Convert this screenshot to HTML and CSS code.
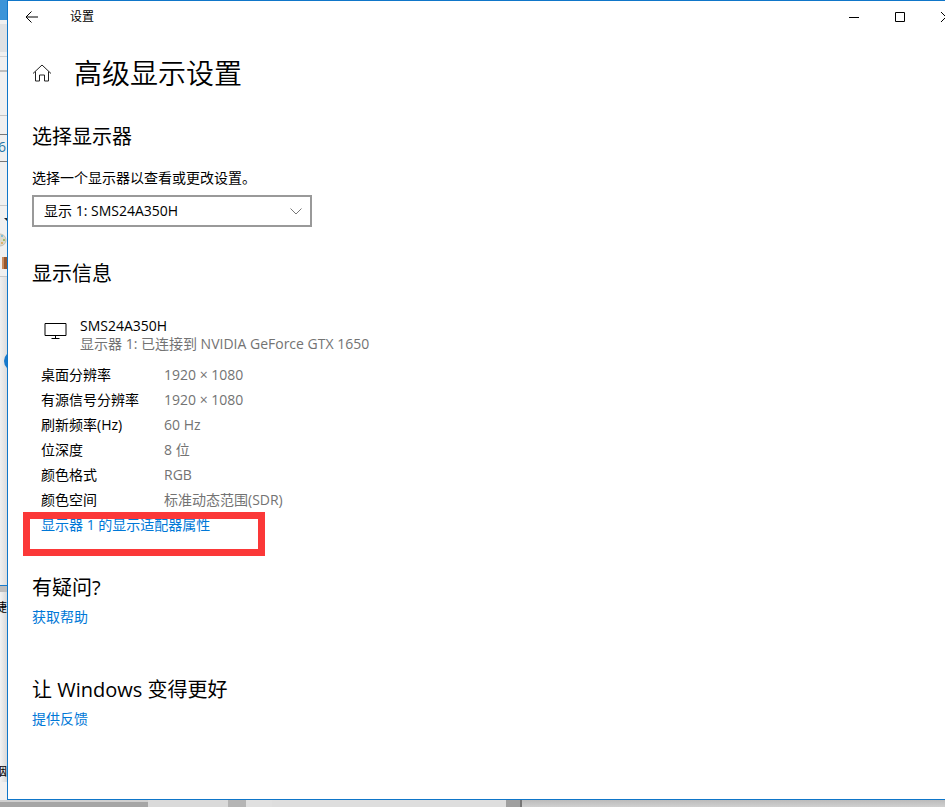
FILE: index.html
```html
<!DOCTYPE html>
<html lang="zh-CN">

<head>
  <meta charset="UTF-8" />
  <meta name="viewport" content="width=device-width, initial-scale=1.0" />
  <title>设置</title>
  <link rel="stylesheet" href="styles.css">
</head>

<body>
  <!-- windows behind the settings window, left edge -->
  <div class="behind-left">
    <div class="strip blue"></div>
    <div class="strip tabs"></div>
    <div class="strip address"></div>
    <div class="strip toolbar"></div>
    <div class="strip ruler"></div>
    <div class="strip size-box">6</div>
    <div class="strip gap"></div>
    <div class="strip tools">
      <svg width="7" height="71" viewBox="0 0 7 71">
        <path d="M4 12h6l-3 3z" fill="#222" />
        <circle cx="0" cy="34" r="6" fill="#dcd9cd" stroke="#c2bfb4" />
        <circle cx="2" cy="30" r="1" fill="#5fb3dd" />
        <circle cx="4" cy="34" r="1" fill="#8cb84f" />
        <circle cx="2" cy="37" r="1" fill="#e0a04a" />
        <path d="M2 51h6v12H2z" fill="#96572f" />
        <path d="M2 51h2v12H2z" fill="#c98b5e" />
      </svg>
    </div>
    <div class="strip canvas">
      <div class="dot"></div>
    </div>
    <div class="strip shade"></div>
    <div class="strip desktop">
      <span>捷</span>
      <span>烟</span>
    </div>
  </div>

  <div class="window">
    <div class="titlebar">
      <button class="back" aria-label="返回">
        <svg width="14" height="12" viewBox="0 0 14 12">
          <path d="M13 6H1M6.500 .5L1 6l5.500 5.500" />
        </svg>
      </button>
      <span class="caption">设置</span>
      <div class="controls">
        <button aria-label="最小化">
          <svg width="10" height="10" viewBox="0 0 10 10"><path d="M0 5.500h10" /></svg>
        </button>
        <button aria-label="最大化">
          <svg width="10" height="10" viewBox="0 0 10 10"><path d="M.5 .5h9v9h-9z" /></svg>
        </button>
        <button aria-label="关闭">
          <svg width="10" height="10" viewBox="0 0 10 10"><path d="M0 0l10 10M10 0L0 10" /></svg>
        </button>
      </div>
    </div>

    <div class="content">
      <div class="header">
        <a href="#" class="home" aria-label="主页">
          <svg width="20" height="18" viewBox="0 0 20 18">
            <path d="M1 9.500L10 1l9 8.500M3.500 7.500v9.500h4v-6h5v6h4V7.500" />
          </svg>
        </a>
        <h1>高级显示设置</h1>
      </div>

      <h2>选择显示器</h2>
      <label for="display" class="display-label">选择一个显示器以查看或更改设置。</label>
      <div class="select-box">
        <select id="display">
          <option>显示 1: SMS24A350H</option>
        </select>
        <svg class="arrow" width="12" height="7" viewBox="0 0 12 7"><path d="M.5 .5L6 6l5.500-5.500" /></svg>
      </div>

      <h2 class="info-title">显示信息</h2>
      <div class="info">
        <div class="monitor">
          <svg width="24" height="18" viewBox="0 0 24 18">
            <path d="M1 1.500h21v12H1zM11.500 13.500v3M7.500 16.500h8" />
          </svg>
          <div>
            <p class="name">SMS24A350H</p>
            <p class="status">显示器 1: 已连接到 NVIDIA GeForce GTX 1650</p>
          </div>
        </div>
        <table>
          <tr><th scope="row">桌面分辨率</th><td>1920 × 1080</td></tr>
          <tr><th scope="row">有源信号分辨率</th><td>1920 × 1080</td></tr>
          <tr><th scope="row">刷新频率(Hz)</th><td>60 Hz</td></tr>
          <tr><th scope="row">位深度</th><td>8 位</td></tr>
          <tr><th scope="row">颜色格式</th><td>RGB</td></tr>
          <tr><th scope="row">颜色空间</th><td>标准动态范围(SDR)</td></tr>
        </table>
        <div class="adapter">
          <a href="#">显示器 1 的显示适配器属性</a>
          <div class="mark"></div>
        </div>
      </div>

      <h2 class="question">有疑问?</h2>
      <a href="#">获取帮助</a>

      <h2 class="feedback">让 Windows 变得更好</h2>
      <a href="#">提供反馈</a>
    </div>
  </div>

  <!-- windows behind, bottom edge -->
  <div class="behind-bottom">
    <div class="scroll-thumb"></div>
    <div class="track"></div>
    <div class="corner"></div>
    <div class="page"></div>
    <div class="bar"></div>
    <div class="rest"></div>
  </div>
</body>

</html>
```

FILE: styles.css
```css
* {
  box-sizing: border-box;
}

body {
  display: grid;
  grid-template-columns: 7px 1fr;
  grid-template-rows: 1fr 7px;
  height: 100vh;
  margin: 0;
  overflow: hidden;
  background-color: #e6e6e6;
  color: black;
  font-family: "Open Sans", "Noto Sans CJK SC", sans-serif;
  font-size: 14px;
  line-height: 20px;
}

h1,
h2,
p {
  margin: 0;
  font-weight: normal;
}

a {
  color: #0078d7;
  text-decoration: none;
}

button {
  display: flex;
  align-items: center;
  justify-content: center;
  padding: 0;
  border: none;
  background: none;
}

svg {
  display: block;
  fill: none;
  stroke: black;
}

/* left edge */
.behind-left {
  display: flex;
  flex-direction: column;
  min-height: 0;
  overflow: hidden;
  background-color: #f0f0f0;
}

.strip {
  flex-shrink: 0;
  overflow: hidden;
}

.blue {
  height: 20px;
  background-color: #3c94d8;
}

.tabs {
  height: 32px;
  border-top: 4px solid #f0f0f0;
  background-color: #dfe1e3;
}

.address {
  height: 16px;
  margin-top: 4px;
  border-top: 1px solid #cfcfcf;
  border-bottom: 2px solid #bdbdbd;
}

.toolbar {
  height: 44px;
  border-bottom: 1px solid #c4c4c4;
}

.ruler {
  height: 18px;
}

.size-box {
  height: 28px;
  border-top: 1px solid #777;
  border-bottom: 1px solid #777;
  color: #2878a8;
  line-height: 24px;
  text-indent: -2px;
}

.gap {
  height: 44px;
  border-bottom: 1px solid #c8c8c8;
}

.tools {
  height: 71px;
  border-bottom: 1px solid #c8c8c8;
}

.tools svg {
  stroke: none;
}

.canvas {
  height: 309px;
  padding-top: 74px;
  border-bottom: 1px solid #1a7bcb;
  background: linear-gradient(to right, #f0f0f0, #dcdcdc);
}

.dot {
  width: 20px;
  height: 20px;
  margin-left: 4px;
  border-radius: 50%;
  background-color: #1979ca;
}

.shade {
  height: 6px;
  background-color: #bdbdbd;
}

.desktop {
  display: flex;
  flex-direction: column;
  gap: 144px;
  padding-top: 6px;
  background: linear-gradient(to right, #f3f3f3, #d8d8d8);
  font-size: 12px;
  direction: rtl;
}

/* settings window */
.window {
  min-height: 0;
  margin-right: -25px;
  border: 1px solid #0f76c9;
  background-color: white;
}

.titlebar {
  display: flex;
  align-items: center;
  height: 32px;
}

.back {
  width: 48px;
  height: 32px;
}

.caption {
  margin-left: 14px;
  font-size: 12px;
}

.controls {
  display: flex;
  margin-left: auto;
}

.controls button {
  width: 46px;
  height: 32px;
}

.content {
  padding: 20px 24px;
}

.header {
  display: flex;
  align-items: center;
  gap: 22px;
  height: 40px;
  margin-bottom: 30px;
}

.home svg {
  stroke: #222;
}

h1 {
  font-size: 28px;
  font-weight: 350;
  line-height: 40px;
}

h2 {
  font-size: 20px;
  line-height: 28px;
}

.display-label {
  display: block;
  margin: 17px 0 7px;
}

.select-box {
  position: relative;
  width: 280px;
}

select {
  width: 100%;
  height: 32px;
  padding: 0 10px 1px;
  border: 2px solid #999;
  border-radius: 0;
  appearance: none;
  background-color: white;
  color: black;
  font-family: inherit;
  font-size: 14px;
}

.arrow {
  position: absolute;
  top: 13px;
  right: 10px;
  stroke: #777;
  pointer-events: none;
}

.info-title {
  margin: 33px 0 29px;
}

.info {
  padding-left: 9px;
}

.monitor {
  display: flex;
  gap: 12px;
  padding-left: 3px;
  margin-bottom: 9px;
  line-height: 18px;
}

.monitor svg {
  margin-top: 5px;
}

.status,
td {
  color: #737373;
}

table {
  border-collapse: collapse;
}

th,
td {
  height: 25px;
  padding: 0;
  text-align: left;
}

th {
  width: 123px;
  font-weight: normal;
}

.adapter {
  position: relative;
  padding: 3px 0 2px;
}

/* red frame over the link */
.mark {
  position: absolute;
  top: 0;
  left: -18px;
  width: 242px;
  height: 44px;
  border: 7px solid #fb3838;
  pointer-events: none;
}

.question {
  margin: 37px 0 5px;
}

.feedback {
  margin: 49px 0 5px;
}

/* bottom edge */
.behind-bottom {
  display: flex;
  grid-column: 1 / 3;
  overflow: hidden;
}

.scroll-thumb {
  width: 148px;
  border-top: 2px solid #d0d0d0;
  background-color: #a6a6a6;
}

.track {
  width: 80px;
  background-color: #dadada;
}

.corner {
  width: 18px;
  background-color: #b5b5b5;
}

.page {
  width: 260px;
  border-left: 26px solid #e0e0e0;
  background-color: #dedede;
}

.bar {
  width: 16px;
  border-right: 2px solid #777;
  background-color: #a0a0a0;
}

.rest {
  flex: 1;
  background: linear-gradient(#bcbcbc, #d0d0d0);
}
```
